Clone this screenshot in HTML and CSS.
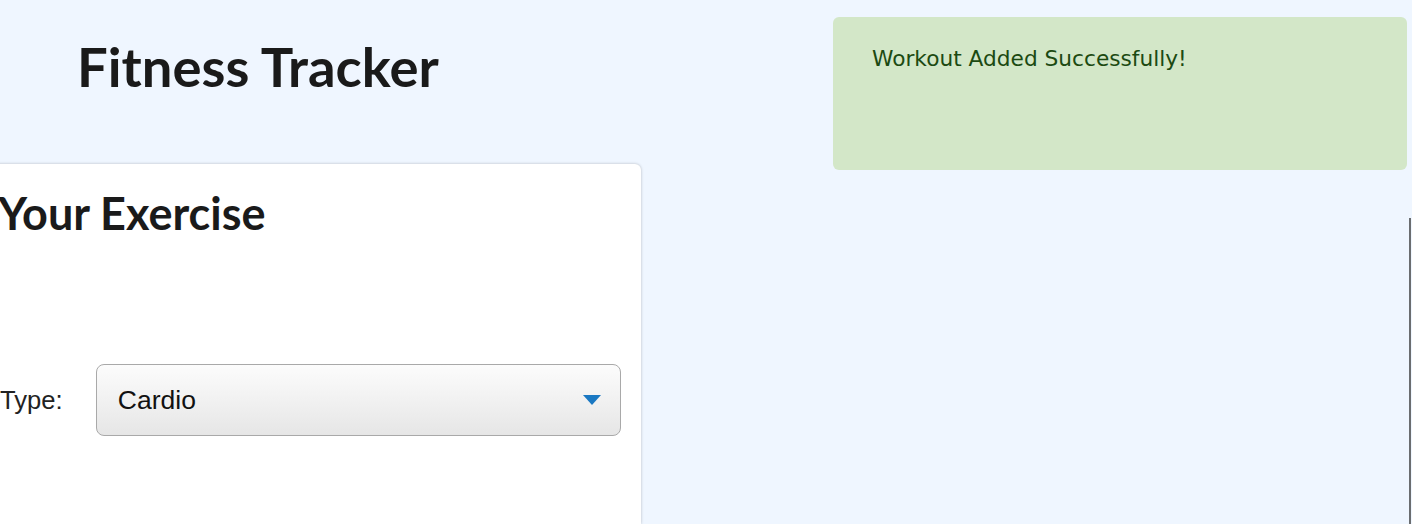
FILE: index.html
```html
<!DOCTYPE html>
<html>
<head>
<meta charset="utf-8">
<link rel="stylesheet" href="styles.css">
</head>
<body>
<div class="page">
  <div class="left">
    <h1 class="title">Fitness Tracker</h1>
    <div class="card">
      <h2 class="card-title">Your Exercise</h2>
      <div class="field">
        <label class="label">Type:</label>
        <div class="select">
          <span class="select-value">Cardio</span>
          <svg class="select-arrow" width="18" height="10" viewBox="0 0 18 10"><path d="M0 0 L18 0 L9 10 Z" fill="#1a78c2"/></svg>
        </div>
      </div>
    </div>
  </div>
  <div class="right">
    <div class="alert">Workout Added Successfully!</div>
    <div class="side-line"></div>
  </div>
</div>
</body>
</html>
```
FILE: styles.css
```css
html, body {
  margin: 0;
  padding: 0;
  background: #eff6ff;
  overflow: hidden;
  height: 524px;
}
.page {
  display: flex;
  width: 1412px;
  height: 524px;
}
.left {
  width: 641px;
  display: flex;
  flex-direction: column;
}
.title {
  font-family: Lato, sans-serif;
  font-weight: 700;
  font-size: 54.4px;
  color: #1a1a1a;
  margin: 34px 0 0 77px;
  line-height: 64px;
  height: 130px;
}
.card {
  margin-left: -40px;
  width: 681px;
  flex: 1;
  background: #fff;
  border-radius: 6px 6px 0 0;
  box-shadow: 0 0 3px rgba(0,0,0,0.25);
  padding: 20px 20px 0 38px;
  box-sizing: border-box;
}
.card-title {
  font-family: Lato, sans-serif;
  font-weight: 700;
  font-size: 45px;
  color: #1a1a1a;
  margin: 0;
  line-height: 58px;
}
.field {
  display: flex;
  align-items: center;
  margin-top: 122px;
  margin-left: 2px;
}
.label {
  font-family: "Liberation Sans", Arial, sans-serif;
  font-size: 25.6px;
  color: #222;
  width: 96px;
}
.select {
  width: 526px;
  height: 72px;
  box-sizing: border-box;
  border: 1px solid #a9a9a9;
  border-radius: 8px;
  background: linear-gradient(#fcfcfc, #e6e6e6);
  display: flex;
  align-items: center;
  justify-content: space-between;
  padding: 0 19px 0 21px;
}
.select-value {
  font-family: "Liberation Sans", Arial, sans-serif;
  font-size: 26.5px;
  color: #111;
}
.right {
  flex: 1;
  position: relative;
  padding-left: 192px;
}
.alert {
  margin-top: 17px;
  width: 574px;
  height: 153px;
  box-sizing: border-box;
  background: #d3e7c8;
  border-radius: 6px;
  color: #1c4a12;
  font-family: "DejaVu Sans", Verdana, sans-serif;
  font-size: 21.7px;
  padding: 29px 39px;
}
.side-line {
  position: absolute;
  left: 768px;
  top: 218px;
  bottom: 0;
  width: 2px;
  background: #6a6d70;
}
```
